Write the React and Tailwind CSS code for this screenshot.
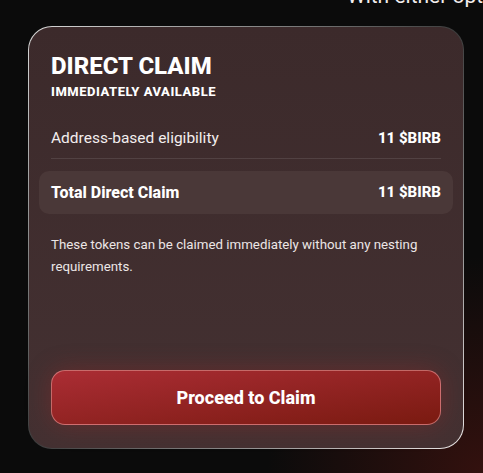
export default function App() {
  return (
    <div
      className="min-h-screen w-full bg-[#0b0b0b] bg-[radial-gradient(circle_at_100%_100%,rgba(100,24,18,0.45),transparent_32%)] overflow-hidden"
      style={{ fontFamily: "Roboto, 'Liberation Sans', sans-serif" }}
    >
      <div className="h-[26px] overflow-hidden">
        <p className="-mt-[14px] pl-[347px] whitespace-nowrap text-[21px] leading-[20px] text-[#f2eded]">
          With either option you can claim
        </p>
      </div>
      <div className="ml-[28px] w-[436px] h-[423px] rounded-[24px] p-px bg-linear-to-br from-white/85 via-white/20 to-white/90">
        <div className="flex h-full flex-col rounded-[23px] bg-linear-to-b from-[#3c2a2b] to-[#443132] px-[22px] pt-[23px] pb-[23px]">
          <h1 className="text-[24px] leading-[32px] font-extrabold text-white">DIRECT CLAIM</h1>
          <div className="mt-[2px] text-[13px] leading-[16px] font-extrabold tracking-[0.04em] text-white">
            IMMEDIATELY AVAILABLE
          </div>
          <div className="mt-[26px] flex items-center justify-between border-b border-white/10 pb-[8px] leading-[24px]">
            <span className="text-[15.5px] text-[#f3eeee]">Address-based eligibility</span>
            <span className="text-[15px] font-extrabold text-white">11 $BIRB</span>
          </div>
          <div className="-mx-[12px] mt-[12px] flex h-[43px] items-center justify-between rounded-[10px] bg-[#4a3838] px-[12px]">
            <span className="text-[16px] font-extrabold text-white">Total Direct Claim</span>
            <span className="text-[15px] font-extrabold text-white">11 $BIRB</span>
          </div>
          <p className="mt-[20px] text-[13.3px] leading-[22px] text-[#ece6e6]">
            These tokens can be claimed immediately without any nesting requirements.
          </p>
          <button className="mt-auto flex h-[55px] w-full items-center justify-center rounded-[14px] border border-[#e08a8a]/70 bg-linear-to-br from-[#ab2d34] to-[#7a1a10] text-[18px] font-extrabold text-white shadow-[0_0_24px_rgba(170,40,40,0.35)]">
            Proceed to Claim
          </button>
        </div>
      </div>
    </div>
  );
}
